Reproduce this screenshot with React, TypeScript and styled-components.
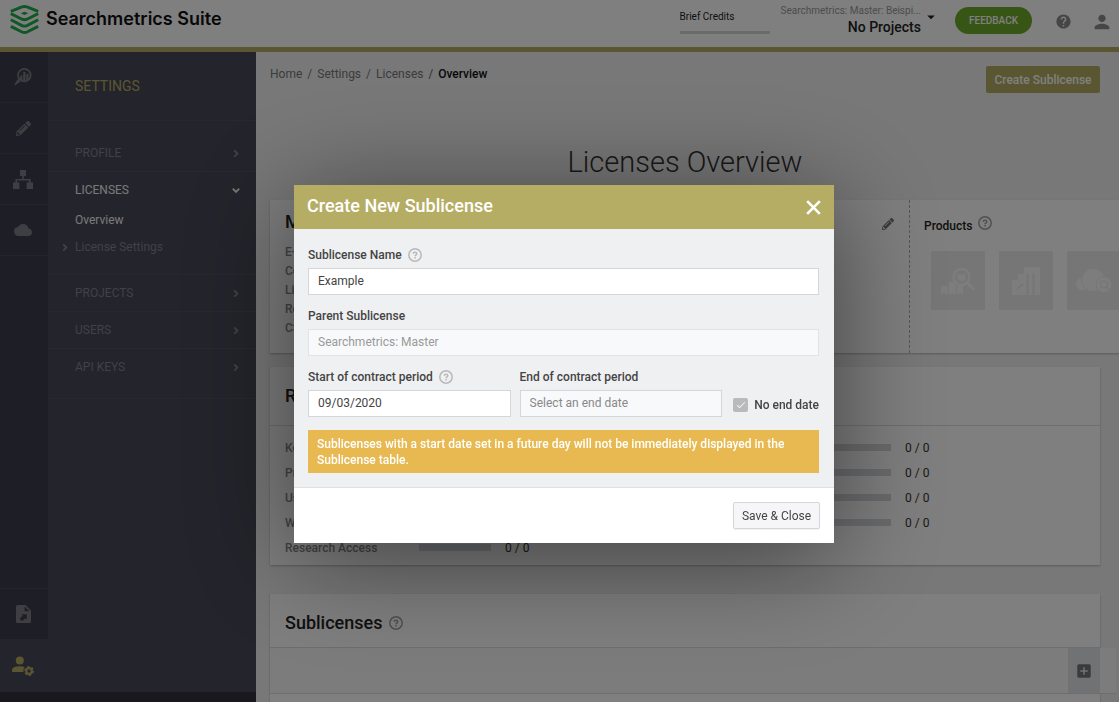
import React from "react";
import styled, { createGlobalStyle } from "styled-components";
import { FaPencilAlt } from "react-icons/fa";
import { MdAddBox, MdArrowDropDown, MdCloud, MdHelp, MdPerson } from "react-icons/md";

const gold = "#b6ad64";
const line = "#dcdde0";

const GlobalStyle = createGlobalStyle`
  *, *::before, *::after { box-sizing: border-box; }
  html, body { margin: 0; height: 100%; }
  body {
    overflow: hidden;
    background: #f0f0f2;
    color: #333;
    font-family: Roboto, "Liberation Sans", sans-serif;
    font-size: 12px;
    line-height: 16px;
  }
  #root { height: 100%; }
  button, input { font: inherit; }
  h1, h2, h3, p, ul, ol, dl, dd { margin: 0; padding: 0; }
  ul, ol { list-style: none; }
  a { color: inherit; text-decoration: none; }
  svg { display: block; flex: none; }
`;

const Page = styled.div`
  display: flex;
  flex-direction: column;
  height: 100vh;
`;

/* Top bar */
const TopBar = styled.header`
  display: flex;
  align-items: flex-start;
  flex: none;
  height: 52px;
  padding: 0 6px 0 10px;
  background: #fff;
  border-bottom: 5px solid ${gold};
`;
const Brand = styled.a`
  display: flex;
  align-items: center;
  gap: 7px;
  margin-right: auto;
  padding-top: 5px;
  color: #111;
  font-family: Inter, sans-serif;
  font-size: 18px;
  font-weight: 600;
  line-height: 28px;
`;
const BrandName = styled.span`
  padding-bottom: 2px;
`;
const Credits = styled.div`
  width: 90px;
  padding-top: 9px;
  font-size: 10px;
  color: #222;
`;
const CreditsBar = styled.div`
  height: 3px;
  margin-top: 6px;
  background: #d4d4d6;
`;
const ProjectPicker = styled.button`
  display: flex;
  align-items: flex-start;
  gap: 1px;
  margin-left: 11px;
  padding: 4px 0 0;
  border: 0;
  background: none;
  text-align: right;
`;
const ProjectText = styled.span`
  display: flex;
  flex-direction: column;
`;
const ProjectOwner = styled.span`
  color: #999;
  font-size: 10px;
  line-height: 14px;
`;
const ProjectName = styled.span`
  color: #222;
  font-size: 14px;
  font-weight: 500;
  line-height: 18px;
`;
const Caret = styled.span`
  padding-top: 4px;
  color: #222;
`;
const Feedback = styled.button`
  width: 77px;
  height: 27px;
  margin: 7px 23px 0 15px;
  padding: 0;
  border: 0;
  border-radius: 14px;
  background: #6eab2b;
  color: #fff;
  font-size: 10px;
  font-weight: 500;
`;
const TopIcon = styled.button`
  margin: 13px 0 0;
  padding: 0;
  border: 0;
  background: none;
  color: #8c8c8e;
  & + & { margin: 11px 0 0 19px; }
`;

/* Left side */
const Body = styled.div`
  display: flex;
  flex: 1;
  min-height: 0;
`;
const Side = styled.div`
  display: flex;
  flex: none;
  width: 256px;
  background: #484858;
  border-bottom: 10px solid #34303f;
`;
const Rail = styled.nav`
  display: flex;
  flex-direction: column;
  width: 48px;
  background: #3c3c4c;
`;
const RailItem = styled.a<{ $active?: boolean; $last?: boolean }>`
  display: flex;
  align-items: center;
  justify-content: center;
  height: ${(p) => (p.$active ? 53 : 51)}px;
  padding-right: 2px;
  border-bottom: ${(p) => (p.$active || p.$last ? 0 : 1)}px solid #48495c;
  border-top: ${(p) => (p.$last ? 1 : 0)}px solid #48495c;
  background: ${(p) => (p.$active ? "#484858" : "transparent")};
  color: ${(p) => (p.$active ? gold : "#7c7c86")};
`;
const RailSpace = styled.div`
  flex: 1;
`;
const Panel = styled.div`
  flex: 1;
`;
const PanelTitle = styled.h2`
  height: 69px;
  padding: 24px 27px 0;
  border-bottom: 1px solid #50515f;
  color: ${gold};
  font-size: 14px;
  font-weight: 400;
  line-height: 20px;
`;
const Menu = styled.ul`
  padding: 13px 0;
  border-bottom: 1px solid #50515f;
`;
const MenuItem = styled.li`
  & + & > a { border-top: 1px solid #50515f; }
`;
const MenuLink = styled.a<{ $open?: boolean }>`
  display: flex;
  align-items: center;
  justify-content: space-between;
  height: 37px;
  padding: 0 16px 0 27px;
  color: ${(p) => (p.$open ? "#f2f2f2" : "#83838c")};
`;
const SubMenu = styled.ul`
  height: 66px;
`;
const SubLink = styled.a<{ $current?: boolean }>`
  display: flex;
  align-items: center;
  gap: 6px;
  height: ${(p) => (p.$current ? 23 : 31)}px;
  padding-left: ${(p) => (p.$current ? 27 : 13)}px;
  color: ${(p) => (p.$current ? "#f2f2f2" : "#83838c")};
`;

/* Main column */
const Main = styled.main`
  flex: 1;
  min-width: 0;
  overflow: hidden;
  padding: 14px 19px 0 14px;
`;
const MainHead = styled.div`
  display: flex;
  align-items: flex-start;
  justify-content: space-between;
`;
const Crumbs = styled.ol`
  display: flex;
  color: #777;
`;
const Crumb = styled.li`
  & + &::before { content: "/"; margin: 0 5px; color: #777; }
  &[aria-current] { color: #111; font-weight: 500; }
`;
const CreateButton = styled.button`
  height: 27px;
  width: 114px;
  padding: 0;
  border: 0;
  border-radius: 2px;
  background: ${gold};
  color: #fff;
  font-weight: 500;
`;
const Title = styled.h1`
  margin: 49px 0 18px;
  color: #333;
  font-size: 29px;
  font-weight: 300;
  line-height: 40px;
  text-align: center;
`;
const Card = styled.section`
  margin-bottom: 14px;
  background: #fff;
  box-shadow: 0 1px 2px rgba(0, 0, 0, 0.25);
`;
const LicenseCard = styled(Card)`
  display: flex;
  width: calc(100% + 60px);
  height: 153px;
`;
const Details = styled.div`
  position: relative;
  flex: 1;
  padding: 12px 15px;
`;
const CardTitle = styled.h2`
  color: #222;
  font-size: 18px;
  font-weight: 500;
  line-height: 20px;
`;
const DetailList = styled.ul`
  padding-top: 11px;
  color: #888;
  font-weight: 500;
  line-height: 19px;
`;
const EditButton = styled.button`
  position: absolute;
  top: 18px;
  right: 15px;
  padding: 0;
  border: 0;
  background: none;
  color: #777;
`;
const Products = styled.div`
  width: 251px;
  padding: 16px 0 0 14px;
  border-left: 1px dashed #aaa;
`;
const ProductsTitle = styled.h3`
  display: flex;
  gap: 6px;
  height: 20px;
  color: #222;
  font-size: 12px;
  font-weight: 500;
  line-height: 20px;
`;
const Tiles = styled.div`
  display: flex;
  gap: 14px;
  padding: 15px 7px 0;
`;
const Tile = styled.div`
  display: flex;
  flex: none;
  align-items: center;
  justify-content: center;
  width: 54px;
  height: 59px;
  background: #ececee;
  color: #fbfbfb;
`;
const HelpMark = styled.span<{ $dark?: boolean }>`
  color: ${(p) => (p.$dark ? "#a0a0a0" : "#b9b9ba")};
`;
const CardHead = styled.div<{ $height: number }>`
  display: flex;
  align-items: center;
  gap: 7px;
  height: ${(p) => p.$height}px;
  padding: 0 15px;
  border-bottom: 1px solid ${line};
`;
const Usage = styled.div`
  display: grid;
  grid-template-columns: 1fr 1fr;
  height: 139px;
  padding: 9px 15px 0;
`;
const UsageRow = styled.li`
  display: flex;
  align-items: center;
  height: 25px;
`;
const UsageLabel = styled.span`
  width: 134px;
  color: #888;
  font-weight: 500;
`;
const UsageBar = styled.span`
  width: 72px;
  height: 7px;
  margin-right: 14px;
  background: #d5d7da;
`;
const ListCard = styled(Card)`
  margin-top: 29px;
  height: 140px;
`;
const ListHead = styled(CardHead)`
  padding-top: 4px;
`;
const ListTools = styled.div`
  display: flex;
  justify-content: flex-end;
  width: calc(100% + 16px);
  height: 46px;
  padding-right: 16px;
  border-bottom: 1px solid ${line};
  background: #f8f8f9;
`;
const AddButton = styled.button`
  display: flex;
  align-items: center;
  justify-content: center;
  width: 32px;
  padding: 0;
  border: 0;
  background: #e3e5e8;
  color: #777;
`;

/* Dialog */
const Overlay = styled.div`
  position: fixed;
  inset: 0;
  display: flex;
  align-items: flex-start;
  justify-content: center;
  padding: 185px 0 0 9px;
  background: rgba(0, 0, 0, 0.5);
`;
const Dialog = styled.form`
  width: 540px;
  background: #fff;
  box-shadow: 0 15px 100px rgba(0, 0, 0, 0.5);
  color: #444;
`;
const DialogHead = styled.header`
  display: flex;
  align-items: center;
  justify-content: space-between;
  height: 44px;
  padding: 0 13px;
  background: ${gold};
  color: #fff;
`;
const DialogTitle = styled.h2`
  padding-bottom: 3px;
  font-size: 18px;
  font-weight: 500;
  line-height: 24px;
`;
const CloseButton = styled.button`
  padding: 0;
  border: 0;
  background: none;
  color: #fff;
`;
const DialogBody = styled.div`
  display: flex;
  flex-direction: column;
  gap: 13px;
  padding: 18px 15px 14px 14px;
  background: #eff0f2;
  border-bottom: 1px solid #e0e1e3;
`;
const Field = styled.div`
  flex: 1;
  min-width: 0;
`;
const FieldLabel = styled.div`
  display: flex;
  align-items: center;
  gap: 6px;
  height: 16px;
  margin-bottom: 5px;
  font-weight: 500;
`;
const TextInput = styled.input`
  display: block;
  width: 100%;
  height: 27px;
  padding: 0 9px 1px;
  border: 1px solid #d5d6d9;
  border-radius: 0;
  background: #fff;
  color: #444;
  &:disabled { background: #f8f9fb; border-color: #e2e3e5; color: #999; }
  &::placeholder { color: #888; }
`;
const EndInput = styled(TextInput)`
  background: #f8f9fb;
`;
const Dates = styled.div`
  display: flex;
  gap: 9px;
`;
const NoEnd = styled.label`
  display: flex;
  align-items: center;
  align-self: flex-end;
  gap: 6px;
  height: 25px;
  padding-left: 2px;
  font-weight: 500;
`;
const Tick = styled.input`
  appearance: none;
  position: relative;
  width: 15px;
  height: 14px;
  margin: 0;
  border-radius: 2px;
  background: #b9babb;
  &:checked::after {
    content: "";
    position: absolute;
    left: 6px;
    top: 2px;
    width: 4px;
    height: 8px;
    border: solid #f2f2f2;
    border-width: 0 1px 1px 0;
    transform: rotate(45deg);
  }
`;
const Notice = styled.p`
  padding: 6px 9px 5px;
  background: #e8b950;
  color: #fff;
  font-weight: 500;
`;
const DialogFoot = styled.footer`
  display: flex;
  justify-content: flex-end;
  padding: 14px;
`;
const SaveButton = styled.button`
  width: 87px;
  height: 27px;
  padding: 0;
  border: 1px solid #d5d6d9;
  border-radius: 2px;
  background: #f6f6f9;
  color: #444;
  box-shadow: 0 1px 1px rgba(0, 0, 0, 0.06);
`;

const Logo = () => (
  <svg width="29" height="30" viewBox="0 0 29 30" fill="none" stroke="#1fae4b" strokeWidth="2.9">
    <path d="M0.8 6.4 L12 1.9 Q14.5 1.1 17 1.9 L28.2 6.4" />
    <path d="M0.8 8.6 L12 14.2 Q14.5 15.3 17 14.2 L28.2 8.6" />
    <path d="M0.8 14.8 L12 20.6 Q14.5 21.7 17 20.6 L28.2 14.8" />
    <path d="M0.8 21.4 L12 27 Q14.5 28.1 17 27 L28.2 21.4" />
    <path d="M10.6 8.2 L14.5 6.7 L18.4 8.2 L14.5 10 Z" fill="#1fae4b" stroke="none" />
  </svg>
);

const Chevron = ({ down }: { down?: boolean }) => (
  <svg width="8" height="8" viewBox="0 0 8 8" fill="none" stroke="currentColor" strokeWidth="1.8">
    <path d={down ? "M0.8 2.7 L4 5.9 L7.2 2.7" : "M2.2 1.4 L5.4 4.6 L2.2 7.8"} />
  </svg>
);

const CloseIcon = () => (
  <svg width="15" height="15" viewBox="0 0 15 15" fill="none" stroke="currentColor" strokeWidth="2.6">
    <path d="M1.2 1.2 L13.8 13.8 M13.8 1.2 L1.2 13.8" />
  </svg>
);

const ResearchIcon = () => (
  <svg width="18" height="18" viewBox="0 0 18 18">
    <circle cx="10.3" cy="7.2" r="6.3" fill="none" stroke="currentColor" strokeWidth="1.7" />
    <path d="M6 14 L1 17.2 L0.5 16 L4.5 10.5 Z" fill="currentColor" />
    <path d="M6.2 7.5h2.2v5.3H7.4L6.2 12z M9.2 4h2.3v9h-2.3z M12.3 6h2.2v5.6l-2.2 1.2z" fill="currentColor" />
  </svg>
);

const SitemapIcon = () => (
  <svg width="20" height="19" viewBox="0 0 20 19" fill="currentColor">
    <path d="M7 0h6v6H7z M0 12.5h6.4V19H0z M13.6 12.5H20V19h-6.4z" />
    <path d="M10 6v4M3.2 13v-3.2h13.6V13" fill="none" stroke="currentColor" strokeWidth="1.6" />
  </svg>
);

const ReportIcon = () => (
  <svg width="15" height="18" viewBox="0 0 15 18">
    <path
      fill="currentColor"
      fillRule="evenodd"
      d="M1.5 0H9.5L15 5.6V16.5Q15 18 13.5 18H1.5Q0 18 0 16.5V1.5Q0 0 1.5 0ZM8.6 1.4V6.2H13.5ZM5.2 9.2L7 10.8L4.2 12.8L4.4 15.4L7 15.6L9.2 13.2L10.8 14.8V9.2Z"
    />
  </svg>
);

const AccountIcon = () => (
  <svg width="22" height="20" viewBox="0 0 22 20">
    <circle cx="7.8" cy="4.6" r="4" fill="currentColor" />
    <path d="M0 16V14.2Q0 10.4 7.8 10.2Q10.6 10.2 12.6 11Q11 13 11.4 16Z" fill="currentColor" />
    <circle cx="17" cy="15" r="2.8" fill="none" stroke="currentColor" strokeWidth="2.2" />
    <circle cx="17" cy="15" r="4.2" fill="none" stroke="currentColor" strokeWidth="1.5" strokeDasharray="2.2 2.2" />
  </svg>
);

const ProductResearch = () => (
  <svg width="34" height="28" viewBox="0 0 34 28" fill="currentColor">
    <path d="M0 19h7v8H0z M8 15h7v12H8z M16 18.5h6V27h-6z" />
    <circle cx="20.5" cy="10" r="8" fill="none" stroke="currentColor" strokeWidth="2.4" />
    <path d="M16.5 7.5h8v5q-4 3.5-8 0z" />
    <path d="M26 15.5l7 7" stroke="currentColor" strokeWidth="2.6" />
  </svg>
);

const ProductContent = () => (
  <svg width="28" height="28" viewBox="0 0 28 28">
    <path fill="currentColor" d="M0 13h6V7h6V0h16v28H0z" />
    <path d="M15.5 6v22M21.5 6v22M5 22l6-5" stroke="#ececee" strokeWidth="2" />
  </svg>
);

const ProductCloud = () => (
  <svg width="36" height="24" viewBox="0 0 36 24">
    <circle cx="6.5" cy="15" r="6.5" fill="currentColor" />
    <circle cx="17" cy="11" r="11.5" fill="currentColor" stroke="#ececee" />
    <circle cx="28" cy="15.5" r="8" fill="currentColor" stroke="#ececee" />
    <circle cx="28" cy="15.5" r="3.4" fill="none" stroke="#ececee" strokeWidth="1.4" />
    <path d="M30.4 18l2.4 2.4" stroke="#ececee" strokeWidth="1.4" />
  </svg>
);

const Help = ({ dark }: { dark?: boolean }) => (
  <HelpMark $dark={dark}>
    <svg width="14" height="14" viewBox="0 0 14 14" fill="none" stroke="currentColor">
      <circle cx="7" cy="7" r="6.2" strokeWidth="1.5" />
      <path d="M5.2 5.8Q5.2 4.2 7 4.2T8.8 5.7Q8.8 6.5 7.9 7Q7.1 7.4 7.1 8.3M7.1 9.1V10.5" strokeWidth="1.5" />
    </svg>
  </HelpMark>
);

type UsageEntry = { name?: string; value?: string };

const limits: UsageEntry[] = [
  { name: "Keys" },
  { name: "Pro" },
  { name: "Users" },
  { name: "Web" },
  { name: "Research Access", value: "0 / 0" },
];
const quotas: UsageEntry[] = [{ value: "0 / 0" }, { value: "0 / 0" }, { value: "0 / 0" }, { value: "0 / 0" }];

const UsageList = ({ entries }: { entries: UsageEntry[] }) => (
  <ul>
    {entries.map((entry, i) => (
      <UsageRow key={i}>
        <UsageLabel>{entry.name}</UsageLabel>
        <UsageBar />
        <span>{entry.value}</span>
      </UsageRow>
    ))}
  </ul>
);

export default function App() {
  return (
    <Page>
      <GlobalStyle />
      <TopBar>
        <Brand href="#">
          <Logo />
          <BrandName>Searchmetrics Suite</BrandName>
        </Brand>
        <Credits>
          Brief Credits
          <CreditsBar />
        </Credits>
        <ProjectPicker type="button">
          <ProjectText>
            <ProjectOwner>Searchmetrics: Master: Beispi...</ProjectOwner>
            <ProjectName>No Projects</ProjectName>
          </ProjectText>
          <Caret>
            <MdArrowDropDown size={18} />
          </Caret>
        </ProjectPicker>
        <Feedback type="button">FEEDBACK</Feedback>
        <TopIcon type="button" aria-label="Help">
          <MdHelp size={17} />
        </TopIcon>
        <TopIcon type="button" aria-label="Account">
          <MdPerson size={22} />
        </TopIcon>
      </TopBar>

      <Body>
        <Side>
          <Rail aria-label="Main">
            <RailItem href="#" aria-label="Research"><ResearchIcon /></RailItem>
            <RailItem href="#" aria-label="Content"><FaPencilAlt size={15} /></RailItem>
            <RailItem href="#" aria-label="Site"><SitemapIcon /></RailItem>
            <RailItem href="#" aria-label="Cloud"><MdCloud size={18} /></RailItem>
            <RailSpace />
            <RailItem href="#" aria-label="Reports" $last><ReportIcon /></RailItem>
            <RailItem href="#" aria-label="Settings" $active><AccountIcon /></RailItem>
          </Rail>
          <Panel>
            <PanelTitle>SETTINGS</PanelTitle>
            <Menu>
              <MenuItem><MenuLink href="#">PROFILE<Chevron /></MenuLink></MenuItem>
              <MenuItem>
                <MenuLink href="#" $open>LICENSES<Chevron down /></MenuLink>
                <SubMenu>
                  <li><SubLink href="#" $current>Overview</SubLink></li>
                  <li><SubLink href="#"><Chevron />License Settings</SubLink></li>
                </SubMenu>
              </MenuItem>
              <MenuItem><MenuLink href="#">PROJECTS<Chevron /></MenuLink></MenuItem>
              <MenuItem><MenuLink href="#">USERS<Chevron /></MenuLink></MenuItem>
              <MenuItem><MenuLink href="#">API KEYS<Chevron /></MenuLink></MenuItem>
            </Menu>
          </Panel>
        </Side>

        <Main>
          <MainHead>
            <Crumbs>
              <Crumb><a href="#">Home</a></Crumb>
              <Crumb><a href="#">Settings</a></Crumb>
              <Crumb><a href="#">Licenses</a></Crumb>
              <Crumb aria-current="page">Overview</Crumb>
            </Crumbs>
            <CreateButton type="button">Create Sublicense</CreateButton>
          </MainHead>
          <Title>Licenses Overview</Title>

          <LicenseCard>
            <Details>
              <CardTitle>Me</CardTitle>
              <DetailList>
                <li>E-Mail</li>
                <li>Co</li>
                <li>Life</li>
                <li>Role</li>
                <li>CS</li>
              </DetailList>
              <EditButton type="button" aria-label="Edit"><FaPencilAlt size={12} /></EditButton>
            </Details>
            <Products>
              <ProductsTitle>Products <Help dark /></ProductsTitle>
              <Tiles>
                <Tile><ProductResearch /></Tile>
                <Tile><ProductContent /></Tile>
                <Tile><ProductCloud /></Tile>
              </Tiles>
            </Products>
          </LicenseCard>

          <Card>
            <CardHead $height={59}><CardTitle>Rights</CardTitle></CardHead>
            <Usage>
              <UsageList entries={limits} />
              <UsageList entries={quotas} />
            </Usage>
          </Card>

          <ListCard>
            <ListHead $height={54}>
              <CardTitle>Sublicenses</CardTitle>
              <Help dark />
            </ListHead>
            <ListTools>
              <AddButton type="button" aria-label="Add column"><MdAddBox size={18} /></AddButton>
            </ListTools>
          </ListCard>
        </Main>
      </Body>

      <Overlay>
        <Dialog role="dialog" aria-labelledby="dialog-title" onSubmit={(e) => e.preventDefault()}>
          <DialogHead>
            <DialogTitle id="dialog-title">Create New Sublicense</DialogTitle>
            <CloseButton type="button" aria-label="Close"><CloseIcon /></CloseButton>
          </DialogHead>
          <DialogBody>
            <Field>
              <FieldLabel><label htmlFor="name">Sublicense Name</label><Help /></FieldLabel>
              <TextInput id="name" defaultValue="Example" />
            </Field>
            <Field>
              <FieldLabel><label htmlFor="parent">Parent Sublicense</label></FieldLabel>
              <TextInput id="parent" defaultValue="Searchmetrics: Master" disabled />
            </Field>
            <Dates>
              <Field>
                <FieldLabel><label htmlFor="start">Start of contract period</label><Help /></FieldLabel>
                <TextInput id="start" defaultValue="09/03/2020" />
              </Field>
              <Field>
                <FieldLabel><label htmlFor="end">End of contract period</label></FieldLabel>
                <EndInput id="end" placeholder="Select an end date" />
              </Field>
              <NoEnd>
                <Tick type="checkbox" defaultChecked />
                No end date
              </NoEnd>
            </Dates>
            <Notice>
              Sublicenses with a start date set in a future day will not be immediately displayed in the Sublicense table.
            </Notice>
          </DialogBody>
          <DialogFoot>
            <SaveButton type="submit">Save &amp; Close</SaveButton>
          </DialogFoot>
        </Dialog>
      </Overlay>
    </Page>
  );
}
